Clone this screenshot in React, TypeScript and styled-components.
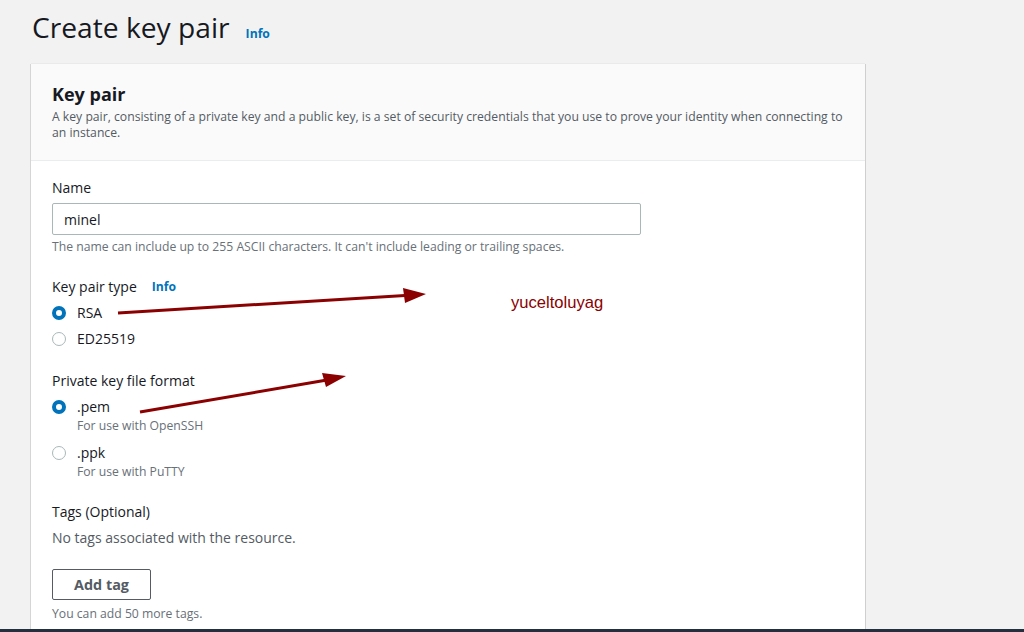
import React from "react";
import styled, { createGlobalStyle } from "styled-components";

const Global = createGlobalStyle`
  html, body { margin: 0; padding: 0; background: #f2f2f2; }
  body { font-family: "Open Sans", "Noto Sans", Arial, sans-serif; color: #16191f; width: 1024px; height: 632px; overflow: hidden; }
`;

const Page = styled.div`
  position: relative;
  width: 1024px;
  height: 632px;
  box-sizing: border-box;
  padding: 8px 0 0 31px;
  display: flex;
  flex-direction: column;
`;

const TitleRow = styled.div`
  display: flex;
  align-items: baseline;
  gap: 16px;
  height: 56px;
`;

const Title = styled.h1`
  margin: 0 0 0 1px;
  font-size: 28.2px;
  font-weight: 400;
  line-height: 38px;
  color: #16191f;
`;

const InfoLink = styled.a`
  font-size: 12.2px;
  font-weight: 700;
  color: #0073bb;
  text-decoration: none;
`;

const Card = styled.section`
  width: 834px;
  flex: 1;
  background: #fff;
  box-shadow: -1px 0 0 #d5d5d5, 1px 0 0 #cfcfcf, 0 -1px 0 #eaeaea;
  display: flex;
  flex-direction: column;
`;

const CardHeader = styled.header`
  background: #fafafa;
  border-bottom: 1px solid #eaeded;
  padding: 17px 21px 0;
  height: 97px;
  box-sizing: border-box;
`;

const CardTitle = styled.h2`
  margin: 0;
  font-size: 18px;
  font-weight: 700;
  line-height: 26px;
`;

const Desc = styled.p`
  margin: 2px 0 0;
  font-size: 12.2px;
  line-height: 16px;
  color: #545b64;
`;

const CardBody = styled.div`
  padding: 17px 21px 0;
  display: flex;
  flex-direction: column;
`;

const Field = styled.div<{ $mt?: number }>`
  margin-top: ${(p) => p.$mt ?? 0}px;
  display: flex;
  flex-direction: column;
`;

const Label = styled.div`
  font-size: 14px;
  line-height: 20px;
  color: #16191f;
  display: flex;
  align-items: center;
  gap: 15px;
`;

const Input = styled.div`
  margin-top: 5px;
  width: 589px;
  height: 32px;
  box-sizing: border-box;
  border: 1px solid #aab7b8;
  border-radius: 2px;
  padding: 0 11px;
  display: flex;
  align-items: center;
  font-size: 14px;
  color: #16191f;
`;

const Hint = styled.div<{ $mt?: number }>`
  margin-top: ${(p) => p.$mt ?? 4}px;
  font-size: 12.2px;
  line-height: 16px;
  color: #687078;
`;

const RadioRow = styled.div<{ $mt?: number }>`
  display: flex;
  align-items: flex-start;
  gap: 11px;
  margin-top: ${(p) => p.$mt ?? 6}px;
`;

const Radio = styled.span<{ $on?: boolean }>`
  width: 14px;
  height: 14px;
  box-sizing: border-box;
  border-radius: 50%;
  margin-top: 3px;
  flex: none;
  border: ${(p) => (p.$on ? "4px solid #0073bb" : "1px solid #aab7b8")};
  background: #fff;
`;

const RadioText = styled.div`
  display: flex;
  flex-direction: column;
`;

const RadioLabel = styled.div`
  font-size: 14px;
  line-height: 20px;
  color: #16191f;
`;

const Muted = styled.div`
  font-size: 14px;
  line-height: 20px;
  color: #545b64;
  margin-top: 6px;
`;

const Button = styled.button`
  margin-top: 21px;
  width: 99px;
  height: 31px;
  border: 1px solid #545b64;
  border-radius: 2px;
  background: #fff;
  font-family: inherit;
  font-size: 14.4px;
  font-weight: 700;
  color: #545b64;
  align-self: flex-start;
  padding: 0;
`;

const BottomBar = styled.div`
  position: absolute;
  left: 0;
  right: 0;
  bottom: 0;
  height: 3px;
  background: #232f3e;
`;

const Annotation = styled.svg`
  position: absolute;
  left: 0;
  top: 0;
  pointer-events: none;
`;

const Watermark = styled.div`
  position: absolute;
  left: 511px;
  top: 293px;
  font-family: "Liberation Sans", Arial, sans-serif;
  font-size: 16.6px;
  color: #8b0000;
`;

export default function App() {
  return (
    <>
      <Global />
      <Page>
        <TitleRow>
          <Title>Create key pair</Title>
          <InfoLink>Info</InfoLink>
        </TitleRow>
        <Card>
          <CardHeader>
            <CardTitle>Key pair</CardTitle>
            <Desc>
              A key pair, consisting of a private key and a public key, is a set of security credentials that you use to
              prove your identity when connecting to an instance.
            </Desc>
          </CardHeader>
          <CardBody>
            <Field>
              <Label>Name</Label>
              <Input>minel</Input>
              <Hint>The name can include up to 255 ASCII characters. It can't include leading or trailing spaces.</Hint>
            </Field>
            <Field $mt={22}>
              <Label>
                Key pair type <InfoLink>Info</InfoLink>
              </Label>
              <RadioRow>
                <Radio $on />
                <RadioLabel>RSA</RadioLabel>
              </RadioRow>
              <RadioRow>
                <Radio />
                <RadioLabel>ED25519</RadioLabel>
              </RadioRow>
            </Field>
            <Field $mt={22}>
              <Label>Private key file format</Label>
              <RadioRow>
                <Radio $on />
                <RadioText>
                  <RadioLabel>.pem</RadioLabel>
                  <Hint $mt={1}>For use with OpenSSH</Hint>
                </RadioText>
              </RadioRow>
              <RadioRow $mt={9}>
                <Radio />
                <RadioText>
                  <RadioLabel>.ppk</RadioLabel>
                  <Hint $mt={1}>For use with PuTTY</Hint>
                </RadioText>
              </RadioRow>
            </Field>
            <Field $mt={22}>
              <Label>Tags (Optional)</Label>
              <Muted>No tags associated with the resource.</Muted>
              <Button>Add tag</Button>
              <Hint $mt={6}>You can add 50 more tags.</Hint>
            </Field>
          </CardBody>
        </Card>
        <Annotation width="1024" height="632" viewBox="0 0 1024 632">
          <line x1="118" y1="313" x2="405" y2="295.5" stroke="#8b0000" strokeWidth="3" />
          <polygon points="426,294 403,288 405,303" fill="#8b0000" />
          <line x1="140" y1="412" x2="327" y2="380" stroke="#8b0000" strokeWidth="3" />
          <polygon points="346,376 322,373 326,387" fill="#8b0000" />
        </Annotation>
        <Watermark>yuceltoluyag</Watermark>
        <BottomBar />
      </Page>
    </>
  );
}
